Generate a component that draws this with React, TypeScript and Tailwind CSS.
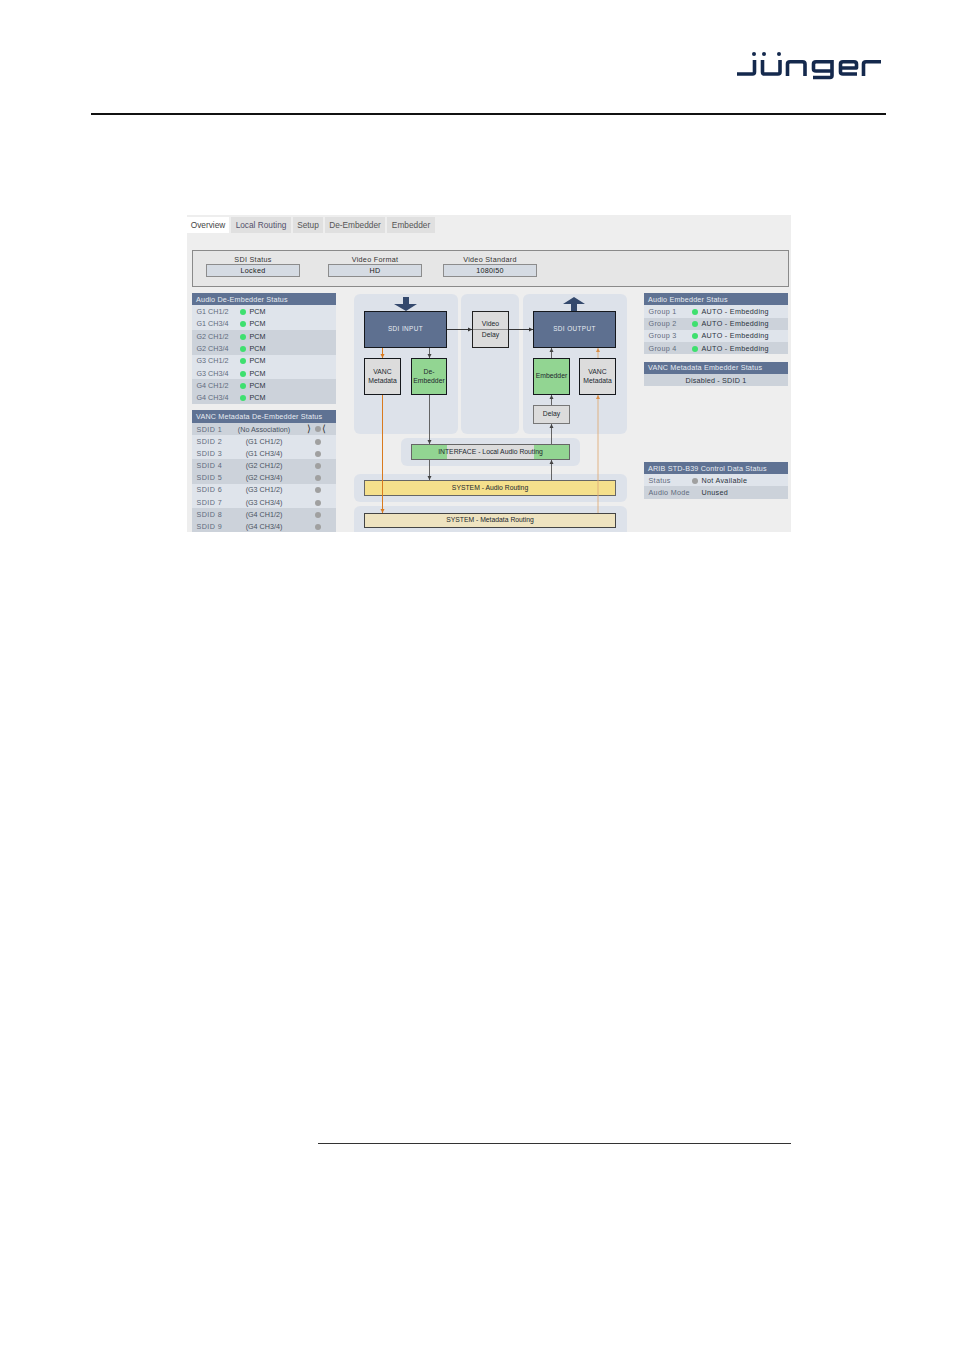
import React from "react";

const font = "font-['Liberation_Sans',Arial,sans-serif]";

function Logo() {
  return (
    <svg width="146" height="30" viewBox="0 0 146 30" fill="none" stroke="#14294d" strokeWidth="3.6" strokeLinejoin="round" aria-label="jünger">
      <path d="M0 23H15.5Q17.5 23 17.5 21V9" />
      <path d="M25.5 9V21Q25.5 23 27.5 23H41Q43 23 43 21V9" />
      <path d="M50.5 25V13Q50.5 10.8 53 10.8H65.5Q68 10.8 68 13V25" />
      <path d="M95 10.8H79Q76.5 10.8 76.5 13V18Q76.5 20 79 20H95M95 9V24.5Q95 26.5 93 26.5H76" />
      <path d="M120 23H106Q103.5 23 103.5 21V13Q103.5 10.8 106 10.8H117Q119.5 10.8 119.5 13V17H104" />
      <path d="M126.5 25V13Q126.5 10.8 129 10.8H144" />
      <g fill="#14294d" stroke="none">
        <circle cx="17" cy="3" r="2" />
        <circle cx="27" cy="3" r="2" />
        <circle cx="42" cy="3" r="2" />
      </g>
    </svg>
  );
}

function Dot({ on }: { on?: boolean }) {
  return <span className={`mb-[1px] block h-[6px] w-[6px] rounded-full ${on ? "bg-[#3fe06f]" : "bg-[#a0a0a0]"}`} />;
}

function PanelTitle({ children }: { children: React.ReactNode }) {
  return <div className="flex h-[12.4px] items-center bg-[#5f7293] pt-[2px] pl-[4px] tracking-[0.18px] text-[#e8ecf2]">{children}</div>;
}

const rowBg = ["bg-[#dfe4eb]", "bg-[#dfe4eb]", "bg-[#ccd2da]", "bg-[#ccd2da]"];

function AudioDeEmbedder() {
  const rows = ["G1 CH1/2", "G1 CH3/4", "G2 CH1/2", "G2 CH3/4", "G3 CH1/2", "G3 CH3/4", "G4 CH1/2", "G4 CH3/4"];
  return (
    <div>
      <PanelTitle>Audio De-Embedder Status</PanelTitle>
      {rows.map((r, i) => (
        <div key={r} className={`flex h-[12.3px] items-center pt-[2px] pl-[4.5px] ${rowBg[i % 4]}`}>
          <span className="w-[43px] text-[#5f6b7c]">{r}</span>
          <Dot on />
          <span className="ml-[4px] text-[#2b3340]">PCM</span>
        </div>
      ))}
    </div>
  );
}

function VancDeEmbedder() {
  const rows = ["(No Association)", "(G1 CH1/2)", "(G1 CH3/4)", "(G2 CH1/2)", "(G2 CH3/4)", "(G3 CH1/2)", "(G3 CH3/4)", "(G4 CH1/2)", "(G4 CH3/4)"];
  const bg = ["bg-[#ccd2da]", "bg-[#dfe4eb]", "bg-[#dfe4eb]", "bg-[#ccd2da]", "bg-[#ccd2da]", "bg-[#dfe4eb]", "bg-[#dfe4eb]", "bg-[#ccd2da]", "bg-[#ccd2da]"];
  return (
    <div className="mt-[6.7px]">
      <PanelTitle>VANC Metadata De-Embedder Status</PanelTitle>
      {rows.map((r, i) => (
        <div key={i} className={`flex h-[12.2px] items-center pt-[2px] pl-[4.5px] ${bg[i]}`}>
          <span className="w-[40.5px] tracking-[0.4px] text-[#5f6b7c]">SDID {i + 1}</span>
          <span className="w-[54px] text-center whitespace-nowrap text-[#4a5361]">{r}</span>
          <span className="relative ml-[24px]">
            <Dot />
            {i === 0 && <span className="absolute top-[-3px] left-[-8px] text-[10px] leading-[12px] text-[#333]">{"\u27E9"}</span>}
            {i === 0 && <span className="absolute top-[-3px] left-[7px] text-[10px] leading-[12px] text-[#333]">{"\u27E8"}</span>}
          </span>
        </div>
      ))}
    </div>
  );
}

function Box({ className, children }: { className: string; children?: React.ReactNode }) {
  return <div className={`absolute flex items-center justify-center text-center leading-[8.5px] ${className}`}>{children}</div>;
}

function Diagram() {
  return (
    <div className="relative h-[238px] w-[273px] text-[6.8px] text-[#22282f]">
      {/* background bands */}
      <Box className="top-0 left-0 h-[140px] w-[104px] rounded-[6px] bg-[#dde2ea]" />
      <Box className="top-0 left-[107px] h-[140px] w-[58px] rounded-[6px] bg-[#dde2ea]" />
      <Box className="top-0 left-[169px] h-[140px] w-[104px] rounded-[6px] bg-[#dde2ea]" />
      <Box className="top-[144px] left-[47px] h-[28px] w-[179px] rounded-[6px] bg-[#dde2ea]" />
      <Box className="top-[180px] left-0 h-[28px] w-[273px] rounded-[6px] bg-[#dde2ea]" />
      <Box className="top-[212px] left-0 h-[40px] w-[273px] rounded-[6px] bg-[#dde2ea]" />

      <Box className="top-[17px] left-[10px] h-[37px] w-[83px] border border-[#15181d] bg-[#5e7090] text-[6.4px] tracking-[0.4px] text-[#e8ecf2]">SDI INPUT</Box>
      <Box className="top-[17px] left-[179px] h-[37px] w-[83px] border border-[#15181d] bg-[#5e7090] text-[6.4px] tracking-[0.4px] text-[#e8ecf2]">SDI OUTPUT</Box>
      <Box className="top-[17px] left-[118px] h-[37px] w-[37px] flex-col gap-[1px] border border-[#222] bg-[#dcdcdc]">
        <span>Video</span>
        <span className="h-px w-full bg-[#8a8a8a]" />
        <span>Delay</span>
      </Box>
      <Box className="top-[64px] left-[10px] h-[37px] w-[37px] border border-[#15181d] bg-[#dcdcdc]">VANC Metadata</Box>
      <Box className="top-[64px] left-[57px] h-[37px] w-[36px] border border-[#15181d] bg-[#92d592]">De-<br />Embedder</Box>
      <Box className="top-[64px] left-[179px] h-[37px] w-[37px] border border-[#15181d] bg-[#92d592]">Embedder</Box>
      <Box className="top-[64px] left-[225px] h-[37px] w-[37px] border border-[#15181d] bg-[#dcdcdc]">VANC Metadata</Box>
      <Box className="top-[111px] left-[179px] h-[19px] w-[37px] border border-[#777] bg-[#dcdcdc]">Delay</Box>
      <Box className="top-[150px] left-[57px] h-[16px] w-[159px] border border-[#666] bg-[linear-gradient(to_right,#92d592_0,#92d592_35px,#dcdcdc_35px,#dcdcdc_122px,#92d592_122px)]">INTERFACE - Local Audio Routing</Box>
      <Box className="top-[186px] left-[10px] h-[16px] w-[252px] border border-[#666] bg-[#f5e08c]">SYSTEM - Audio Routing</Box>
      <Box className="top-[219px] left-[10px] h-[15px] w-[252px] border border-[#444] bg-[#eee3c0]">SYSTEM - Metadata Routing</Box>

      {/* arrow overlay, coordinates follow the boxes above */}
      <svg className="absolute top-0 left-0" width="273" height="238" fill="none">
        <path d="M49 3H55V10H63L52 17L40 10H49Z" fill="#34496d" />
        <path d="M220 3L231 10H223V17H217V10H209Z" fill="#34496d" />
        <g stroke="#222" strokeWidth="0.9">
          <path d="M93 35.5H118M155 35.5H179" />
        </g>
        <g fill="#333">
          <path d="M118 35.5l-4-2v4zM179 35.5l-4-2v4z" />
        </g>
        <g stroke="#555" strokeWidth="0.9">
          <path d="M75.5 54V64M75.5 101V150M75.5 166V186M197.5 130V150M197.5 54V64M197.5 101V111M197.5 166V186" />
        </g>
        <g fill="#444">
          <path d="M75.5 64l-2-4h4zM75.5 150l-2-4h4zM75.5 186l-2-4h4zM197.5 54l-2 4h4zM197.5 101l-2 4h4zM197.5 130l-2 4h4zM197.5 166l-2 4h4z" />
        </g>
        <g stroke="#d97a1e" strokeWidth="1">
          <path d="M28.5 54V64M28.5 101V219" />
        </g>
        <g fill="#d97a1e">
          <path d="M28.5 64l-2-4h4zM28.5 219l-2-4h4z" />
        </g>
        <g stroke="#e0ad78" strokeWidth="0.9">
          <path d="M244 54V64M244 101V219" />
        </g>
        <g fill="#d98f4a">
          <path d="M244 54l-2 4h4zM244 101l-2 4h4z" />
        </g>
      </svg>
    </div>
  );
}

function AudioEmbedder() {
  return (
    <div>
      <PanelTitle>Audio Embedder Status</PanelTitle>
      {["Group 1", "Group 2", "Group 3", "Group 4"].map((g, i) => (
        <div key={g} className={`flex h-[12.2px] items-center pt-[2px] pl-[4.5px] tracking-[0.3px] ${i % 2 ? "bg-[#ccd2da]" : "bg-[#dfe4eb]"}`}>
          <span className="w-[43px] text-[#5f6b7c]">{g}</span>
          <Dot on />
          <span className="ml-[4px] text-[#2b3340]">AUTO - Embedding</span>
        </div>
      ))}
    </div>
  );
}

function Tabs() {
  const tabs = [
    { t: "Overview", w: "w-[42px]", c: "bg-white text-[#444]" },
    { t: "Local Routing", w: "w-[60px]", c: "bg-[#e0e0e0] text-[#53506b]" },
    { t: "Setup", w: "w-[30px]", c: "bg-[#e0e0e0] text-[#555]" },
    { t: "De-Embedder", w: "w-[60px]", c: "bg-[#e0e0e0] text-[#555]" },
    { t: "Embedder", w: "w-[48px]", c: "bg-[#e0e0e0] text-[#555]" },
  ];
  return (
    <div className="flex gap-[2px] pt-[2px]">
      {tabs.map((x) => (
        <div key={x.t} className={`flex h-[16px] items-center justify-center text-[8.3px] ${x.w} ${x.c}`}>{x.t}</div>
      ))}
    </div>
  );
}

function StatusField({ label, value, className }: { label: string; value: string; className: string }) {
  return (
    <div className={`w-[94px] text-center tracking-[0.3px] ${className}`}>
      <div className="h-[13px] leading-[17px] text-[#333]">{label}</div>
      <div className="h-[13px] border border-[#8c8c8c] bg-[#d5dbe3] leading-[12px] text-[#222]">{value}</div>
    </div>
  );
}

export default function App() {
  return (
    <div className={`min-h-[1351px] bg-white text-[7.2px] ${font}`}>
      <header className="ml-[91px] flex h-[115px] w-[795px] flex-col">
        <div className="flex justify-end pt-[51px] pr-[3px]">
          <Logo />
        </div>
        <div className="mt-auto h-[2px] bg-[#111]" />
      </header>

      <main className="mt-[100px] ml-[187px] h-[317px] w-[604px] overflow-hidden bg-[#eeeeee]">
        <Tabs />
        <div className="mt-[17px] ml-[5px] flex h-[37px] w-[597px] border border-[#8a8a8a] bg-[#e6e6e6]">
          <StatusField label="SDI Status" value="Locked" className="ml-[13px]" />
          <StatusField label="Video Format" value="HD" className="ml-[28px]" />
          <StatusField label="Video Standard" value="1080i50" className="ml-[21px]" />
        </div>
        <div className="mt-[6px] ml-[5px] flex">
          <div className="w-[144px]">
            <AudioDeEmbedder />
            <VancDeEmbedder />
          </div>
          <div className="mt-[1px] ml-[18px]">
            <Diagram />
          </div>
          <div className="ml-[17px] w-[144px]">
            <AudioEmbedder />
            <div className="mt-[7.4px]">
              <PanelTitle>VANC Metadata Embedder Status</PanelTitle>
              <div className="flex h-[12.4px] items-center justify-center bg-[#ccd2da] pt-[2px] tracking-[0.2px] text-[#2b3340]">Disabled - SDID 1</div>
            </div>
            <div className="mt-[75.6px]">
              <PanelTitle>ARIB STD-B39 Control Data Status</PanelTitle>
              <div className="flex h-[12.2px] items-center bg-[#dfe4eb] pt-[2px] pl-[4.5px] tracking-[0.3px]">
                <span className="w-[43px] text-[#5f6b7c]">Status</span>
                <Dot />
                <span className="ml-[4px] text-[#2b3340]">Not Available</span>
              </div>
              <div className="flex h-[12.2px] items-center bg-[#ccd2da] pt-[2px] pl-[4.5px] tracking-[0.3px]">
                <span className="w-[53px] text-[#5f6b7c]">Audio Mode</span>
                <span className="text-[#2b3340]">Unused</span>
              </div>
            </div>
          </div>
        </div>
      </main>

      <footer className="mt-[611px] ml-[318px] h-px w-[473px] bg-[#333]" />
    </div>
  );
}
